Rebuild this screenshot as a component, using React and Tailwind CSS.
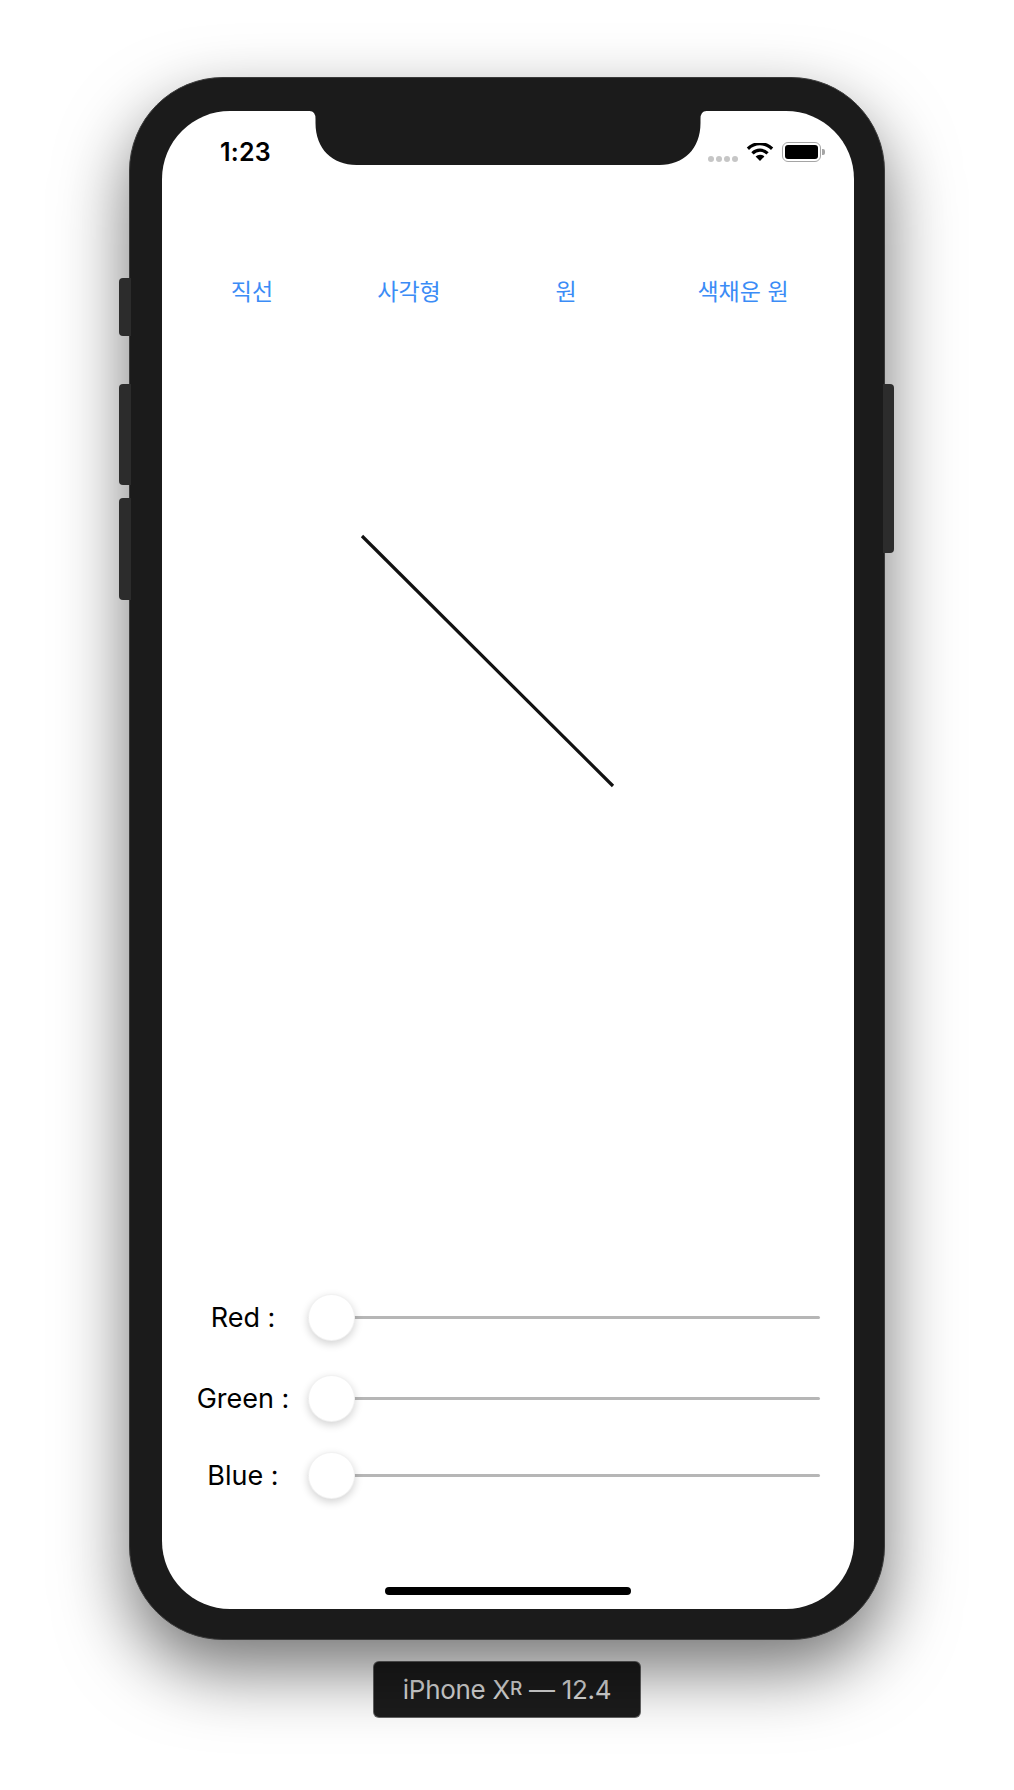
import React from "react";

const font = { fontFamily: "Inter, 'Noto Sans CJK KR', sans-serif" };

const StatusBar = () => (
  <div className="flex items-start h-[52px] shrink-0">
    <span className="ml-[58px] mt-[29px] text-[25px] leading-[25px] font-semibold text-black tracking-[0.2px]">
      1:23
    </span>
    <div className="ml-auto mr-[29px] mt-[31px] flex items-end h-[20px]">
      <div className="flex gap-[2px] mb-0">
        <span className="w-[6px] h-[6px] rounded-full bg-[#c6c6c6]" />
        <span className="w-[6px] h-[6px] rounded-full bg-[#c6c6c6]" />
        <span className="w-[6px] h-[6px] rounded-full bg-[#c6c6c6]" />
        <span className="w-[6px] h-[6px] rounded-full bg-[#c6c6c6]" />
      </div>
      <svg width="28" height="18" viewBox="0 0 28 18" className="ml-[8px] mb-[1px]">
        <path d="M14 18 L9.6 13.4 A6.4 6.4 0 0 1 18.4 13.4 Z" fill="#000" />
        <path d="M5.3 9.2 A12.2 12.2 0 0 1 22.7 9.2 L20.4 11.5 A9 9 0 0 0 7.6 11.5 Z" fill="#000" />
        <path d="M0.8 4.6 A18.6 18.6 0 0 1 27.2 4.6 L25 6.9 A15.4 15.4 0 0 0 3 6.9 Z" fill="#000" />
      </svg>
      <div className="ml-[8px] flex items-center">
        <div className="w-[39px] h-[20px] rounded-[6px] border-[1.5px] border-[#a5a5a5] p-[2px]">
          <div className="w-full h-full rounded-[3px] bg-black" />
        </div>
        <div className="w-[3px] h-[6px] rounded-r-[2px] bg-[#a5a5a5] ml-[1px]" />
      </div>
    </div>
  </div>
);

const Notch = () => (
  <svg
    width="397"
    height="54"
    viewBox="0 0 397 54"
    className="absolute top-0 left-1/2 -translate-x-1/2"
  >
    <path
      d="M0 0 L397 0 Q391 0 391 8 L391 12 C391 38 374 54 350 54 L47 54 C23 54 6 38 6 12 L6 8 Q6 0 0 0 Z"
      fill="#1b1b1b"
    />
  </svg>
);

// each title sits centred in a 120px slot
const ShapeButtons = () => (
  <div className="flex mt-[118px] h-[23px] text-[23px] leading-[23px] text-[#3b8cf6]">
    <button className="ml-[30px] w-[120px] text-center">직선</button>
    <button className="ml-[37px] w-[120px] text-center">사각형</button>
    <button className="ml-[37px] w-[120px] text-center">원</button>
    <button className="ml-[57px] w-[120px] text-center">색채운 원</button>
  </div>
);

const Slider = ({ label, className }) => (
  <div className={`flex items-center h-[47px] ${className}`}>
    <span className="ml-[29px] w-[104px] text-center text-[27px] leading-[32px] text-black">
      {label}
    </span>
    <div className="relative ml-[13px] w-[512px] h-[47px] flex items-center">
      <div className="w-full h-[3px] rounded-full bg-[#b6b6b6]" />
      <div className="absolute left-0 top-0 w-[47px] h-[47px] rounded-full bg-white border border-black/5 shadow-[0_3px_8px_rgba(0,0,0,0.18)]" />
    </div>
  </div>
);

const Screen = () => (
  <div className="relative w-[692px] h-[1498px] rounded-[68px] overflow-hidden bg-white flex flex-col">
    <Notch />
    <StatusBar />
    <ShapeButtons />
    <div className="h-[990px] shrink-0">
      <svg width="692" height="990">
        <line x1="200" y1="232" x2="451" y2="482" stroke="#111" strokeWidth="3.2" />
      </svg>
    </div>
    <Slider label="Red :" />
    <Slider label="Green :" className="mt-[34px]" />
    <Slider label="Blue :" className="mt-[30px]" />
    <div className="mt-auto mb-[14px] mx-auto w-[246px] h-[8px] rounded-full bg-black" />
  </div>
);

export default function App() {
  return (
    <div className="w-[1014px] h-[1790px] bg-white flex flex-col items-center" style={font}>
      <div className="relative mt-[77px] w-[756px] h-[1563px] rounded-[94px] bg-[#1b1b1b] pt-[33px] px-[32px] pb-[32px] border border-[#3a3a3a] shadow-[0_30px_70px_rgba(0,0,0,0.55)]">
        <div className="absolute -left-[11px] top-[200px] w-[12px] h-[58px] rounded-l-[4px] bg-[#2c2c2c]" />
        <div className="absolute -left-[11px] top-[306px] w-[12px] h-[101px] rounded-l-[4px] bg-[#2c2c2c]" />
        <div className="absolute -left-[11px] top-[420px] w-[12px] h-[102px] rounded-l-[4px] bg-[#2c2c2c]" />
        <div className="absolute -right-[10px] top-[306px] w-[11px] h-[169px] rounded-r-[4px] bg-[#2c2c2c]" />
        <Screen />
      </div>
      <div className="mt-[21px] w-[268px] h-[57px] rounded-[6px] bg-[#1c1c1c] border border-[#9a9a9a]/60 flex items-center justify-center text-[26px] text-[#dedede] tracking-[-0.3px]">
        iPhone X<span className="text-[19px] font-medium">R</span>&nbsp;— 12.4
      </div>
    </div>
  );
}
